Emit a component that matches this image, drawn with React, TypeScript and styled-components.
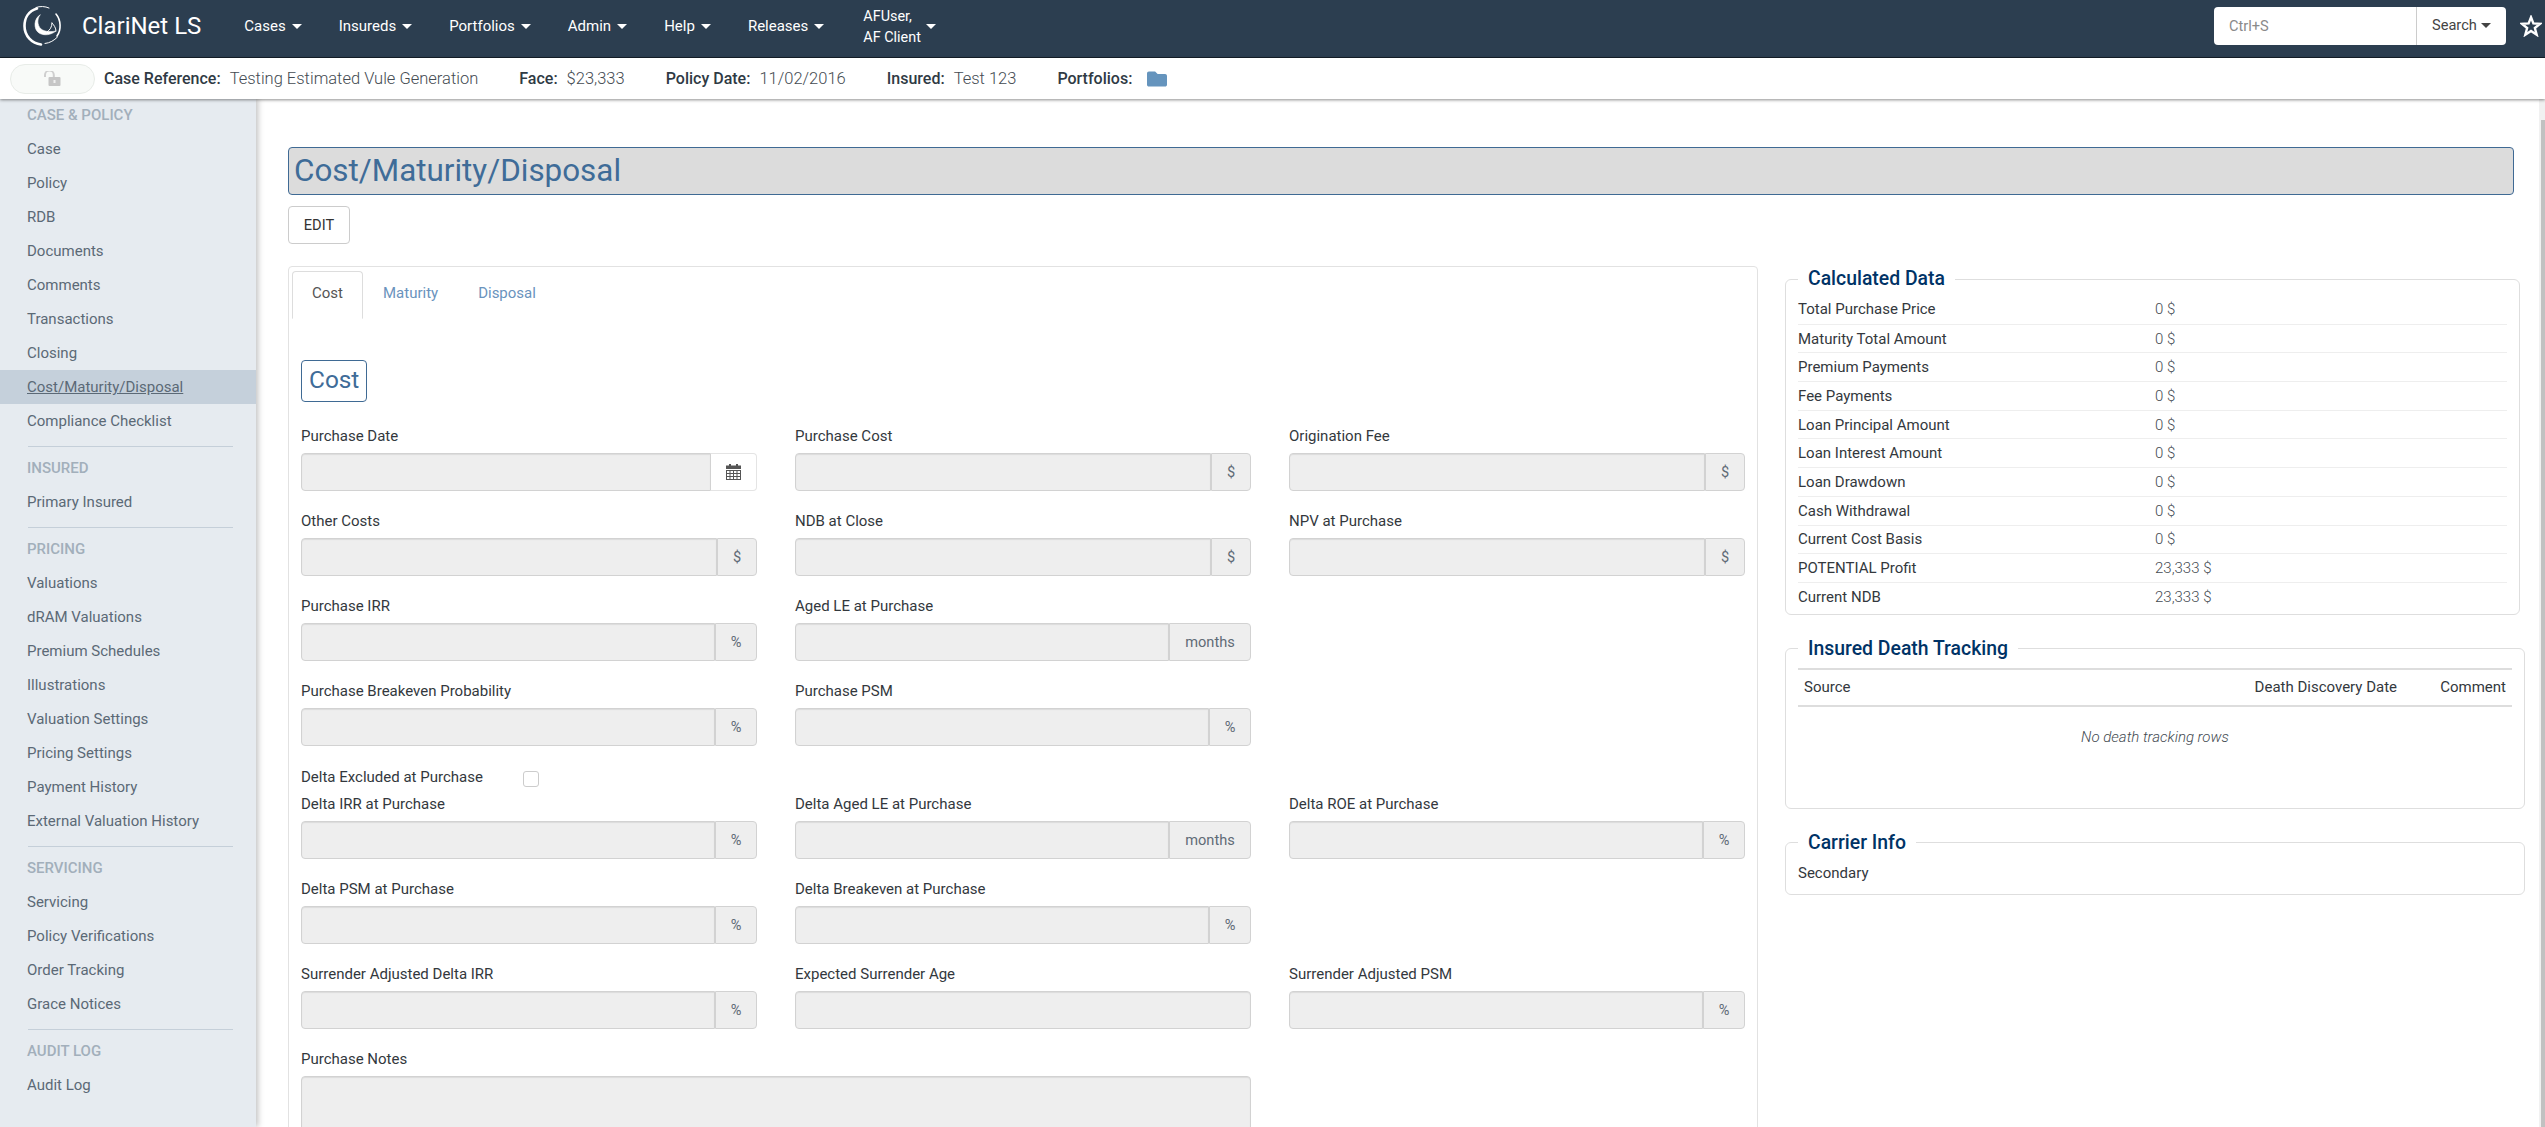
import styled, { createGlobalStyle } from "styled-components";
import { FaFolder } from "react-icons/fa";

const GlobalStyle = createGlobalStyle`
  html, body {
    margin: 0;
    padding: 0;
    height: 100%;
    overflow: hidden;
    background: #fff;
    font-family: Roboto, "Liberation Sans", sans-serif;
    font-size: 15px;
    color: #333;
  }
  * { box-sizing: border-box; }
`;

const Page = styled.div`
  width: 2545px;
  height: 1127px;
  display: flex;
  flex-direction: column;
  overflow: hidden;
`;

const NavBar = styled.nav`
  height: 58px;
  flex: none;
  display: flex;
  align-items: center;
  background: #2c3e50;
  border-bottom: 1px solid #151f29;
  color: #fff;
  padding-left: 23px;
`;

const LogoMark = styled.svg`
  width: 40px;
  height: 42px;
  flex: none;
  margin-bottom: 5px;
`;

const Brand = styled.span`
  font-size: 24px;
  margin-left: 19px;
  margin-right: 43px;
  margin-bottom: 6px;
  white-space: nowrap;
`;

const Caret = styled.i`
  display: inline-block;
  width: 0;
  height: 0;
  margin-left: 6px;
  vertical-align: 2px;
  border-top: 5px solid currentColor;
  border-left: 5px solid transparent;
  border-right: 5px solid transparent;
`;

const NavItem = styled.a`
  font-size: 15px;
  white-space: nowrap;
  margin-right: 37px;
  margin-bottom: 6px;
`;

const UserMenu = styled.div`
  display: flex;
  align-items: center;
  font-size: 14.4px;
  line-height: 21px;
  margin-left: 2px;
  margin-bottom: 4px;
`;

const UserCaret = styled(Caret)`
  margin-left: 5px;
  margin-bottom: 0;
`;

const SearchGroup = styled.div`
  margin-left: auto;
  display: flex;
  height: 38px;
  margin-bottom: 6px;
`;

const SearchInput = styled.div`
  width: 202px;
  background: #fff;
  border-radius: 4px 0 0 4px;
  color: #8a8a8a;
  font-size: 14.6px;
  line-height: 38px;
  padding-left: 15px;
`;

const SearchButton = styled.div`
  width: 90px;
  background: #fff;
  border-left: 1px solid #ccc;
  border-radius: 0 4px 4px 0;
  color: #444;
  font-size: 14.6px;
  line-height: 37px;
  padding-left: 15px;
  white-space: nowrap;

  ${Caret} {
    margin-left: 4px;
  }
`;

const StarIcon = styled.svg`
  width: 22px;
  height: 22px;
  margin: 0 3px 6px 14px;
  flex: none;
`;

const CaseBar = styled.div`
  height: 41px;
  flex: none;
  display: flex;
  align-items: center;
  padding-left: 10px;
  background: #fff;
  font-size: 16.5px;
  font-weight: 300;
  color: #444b52;
  position: relative;
  z-index: 3;
  box-shadow: 0 1px 3px rgba(0, 0, 0, 0.45);
`;

const LockPill = styled.div`
  width: 85px;
  height: 30px;
  margin-right: 9px;
  display: flex;
  align-items: center;
  justify-content: center;
  background: #f8faf8;
  border: 1px solid #e8ece8;
  border-radius: 15px;
`;

const CaseItem = styled.span`
  margin-right: 41px;
  white-space: nowrap;
  display: inline-flex;
  align-items: center;
`;

const CaseLabel = styled.b`
  font-size: 16px;
  font-weight: 500;
  color: #2f3a44;
  margin-right: 9px;
`;

const FolderIcon = styled(FaFolder)`
  width: 20px;
  height: 20px;
  margin-left: 6px;
  color: #6594bd;
`;

const Body = styled.div`
  flex: 1;
  min-height: 0;
  display: flex;
`;

const Sidebar = styled.aside`
  width: 256px;
  flex: none;
  margin-top: -1px;
  background: #e6ebf0;
  box-shadow: 2px 0 6px rgba(0, 0, 0, 0.25);
  position: relative;
  z-index: 2;
  overflow: hidden;
`;

const SideHeading = styled.div`
  height: 34px;
  line-height: 34px;
  padding-left: 27px;
  font-size: 15px;
  font-weight: 500;
  color: #a2afbb;
  text-transform: uppercase;
  white-space: nowrap;
`;

const SideLink = styled.a<{ $active?: boolean }>`
  display: block;
  height: 34px;
  line-height: 34px;
  padding-left: 27px;
  font-size: 15px;
  color: #5b6976;
  white-space: nowrap;
  background: ${(p) => (p.$active ? "#c5d0db" : "transparent")};
  text-decoration: ${(p) => (p.$active ? "underline" : "none")};
`;

const SideDivider = styled.hr`
  border: 0;
  border-top: 1px solid #c5cfd9;
  margin: 8px 23px 4px 28px;
`;

const Main = styled.main`
  flex: 1;
  min-width: 0;
  padding: 48px 25px 0 32px;
  overflow: hidden;
`;

const TitleBar = styled.h1`
  margin: 0;
  height: 48px;
  line-height: 46px;
  padding-left: 5px;
  background: #dcdcdc;
  border: 1px solid #3f6a94;
  border-radius: 4px;
  color: #3f6c98;
  font-size: 31.4px;
  font-weight: 400;
`;

const EditButton = styled.button`
  display: block;
  width: 62px;
  height: 38px;
  margin: 11px 0 22px;
  padding: 0;
  background: #fff;
  border: 1px solid #ccc;
  border-radius: 4px;
  color: #333;
  font-family: inherit;
  font-size: 14.6px;
`;

const Columns = styled.div`
  display: flex;
  align-items: flex-start;
  gap: 27px;
  margin-right: -11px;
`;

const FormPanel = styled.section`
  width: 1470px;
  flex: none;
  border: 1px solid #e2e2e2;
  border-radius: 4px;
  padding: 4px 12px 40px;
`;

const Tabs = styled.div`
  display: flex;
  width: 263px;
  height: 48px;
  margin-left: -9px;
  border-bottom: 1px solid #ddd;
`;

const Tab = styled.div<{ $active?: boolean }>`
  height: 48px;
  line-height: 43px;
  padding: 0 19px;
  color: ${(p) => (p.$active ? "#555" : "#6a93bd")};
  background: #fff;
  border: 1px solid ${(p) => (p.$active ? "#ddd" : "transparent")};
  border-bottom-color: ${(p) => (p.$active ? "#fff" : "transparent")};
  border-radius: 4px 4px 0 0;
`;

const SectionTag = styled.h2`
  display: inline-block;
  margin: 41px 0 24px;
  height: 42px;
  line-height: 38px;
  padding: 0 7px;
  border: 1px solid #3f6a94;
  border-radius: 4px;
  color: #3f6c98;
  font-size: 24.4px;
  font-weight: 400;
`;

const FormRow = styled.div`
  display: grid;
  grid-template-columns: repeat(3, 1fr);
  column-gap: 38px;
`;

const Field = styled.div<{ $span?: number }>`
  grid-column: span ${(p) => p.$span ?? 1};
  min-width: 0;
  padding-bottom: 20px;
`;

const FieldLabel = styled.label`
  display: block;
  height: 21px;
  line-height: 21px;
  margin-bottom: 6px;
  font-size: 15px;
  color: #33383d;
  white-space: nowrap;
`;

const InputGroup = styled.div`
  display: flex;
  height: 38px;
`;

const FakeInput = styled.div`
  flex: 1;
  min-width: 0;
  background: #eeeeee;
  border: 1px solid #d2d2d2;
  border-radius: 4px 0 0 4px;
  box-shadow: inset 0 1px 1px rgba(0, 0, 0, 0.08);
`;

const Addon = styled.span<{ $width: number; $white?: boolean }>`
  width: ${(p) => p.$width}px;
  flex: none;
  display: flex;
  align-items: center;
  justify-content: center;
  background: ${(p) => (p.$white ? "#fff" : "#eee")};
  border: 1px solid ${(p) => (p.$white ? "#e4e4e4" : "#d2d2d2")};
  border-left-color: #d2d2d2;
  border-left-width: ${(p) => (p.$white ? 0 : 1)}px;
  border-radius: 0 4px 4px 0;
  color: #5f6b76;
  font-size: 14.6px;
`;

const FullInput = styled(FakeInput)`
  border-radius: 4px;
`;

const NotesBox = styled(FullInput)`
  flex: none;
  height: 130px;
`;

const CheckRow = styled.div`
  display: flex;
  align-items: center;
  height: 28px;
  padding-bottom: 7px;
`;

const CheckLabel = styled.span`
  width: 222px;
  font-size: 15px;
  color: #33383d;
`;

const CheckBox = styled.span`
  width: 16px;
  height: 16px;
  margin-top: 4px;
  background: #fff;
  border: 1px solid #ccc;
  border-radius: 3px;
`;

const SidePanels = styled.div`
  flex: 1;
  min-width: 0;
  display: flex;
  flex-direction: column;
`;

const Group = styled.fieldset<{ $inset?: number; $minHeight?: number }>`
  margin: 0 ${(p) => p.$inset ?? 0}px 21px 0;
  padding: 0 12px;
  min-width: 0;
  min-height: ${(p) => p.$minHeight ?? 0}px;
  border: 1px solid #dedede;
  border-radius: 6px;
`;

const GroupTitle = styled.legend`
  padding: 0 10px;
  font-size: 19.4px;
  line-height: 26px;
  font-weight: 500;
  color: #003366;
`;

const DataList = styled.div`
  padding: 3px 0;
`;

const DataRow = styled.div`
  display: flex;
  height: 28.7px;
  align-items: center;
  font-size: 15px;
  color: #33383d;
  border-top: 1px solid #eee;

  &:first-of-type {
    border-top: 0;
  }
`;

const DataLabel = styled.span`
  width: 357px;
`;

const DataValue = styled.span`
  font-weight: 300;
  color: #444b52;
`;

const TrackTable = styled.table`
  width: 100%;
  margin-top: 6px;
  border-collapse: collapse;
  font-size: 15px;
  color: #33383d;
`;

const TrackHead = styled.th<{ $width?: number }>`
  width: ${(p) => (p.$width ? `${p.$width}px` : "auto")};
  height: 37px;
  padding: 0 6px;
  font-weight: 400;
  text-align: ${(p) => (p.$width ? "right" : "left")};
  border-top: 2px solid #ddd;
  border-bottom: 2px solid #ddd;
  white-space: nowrap;
`;

const EmptyNote = styled.td`
  height: 62px;
  text-align: center;
  font-style: italic;
  font-weight: 300;
  color: #444b52;
`;

const CarrierLine = styled.div`
  height: 38px;
  padding-top: 5px;
  line-height: 24px;
  font-size: 15px;
  color: #33383d;
`;

const ScrollTrack = styled.div`
  width: 6px;
  flex: none;
  background: #f1f1f1;
  padding-top: 21px;
  display: flex;
  justify-content: flex-end;
`;

const ScrollThumb = styled.div`
  width: 4px;
  height: 100%;
  background: #c1c1c1;
`;

const sideSections = [
  {
    title: "Case & Policy",
    links: ["Case", "Policy", "RDB", "Documents", "Comments", "Transactions", "Closing", "Cost/Maturity/Disposal", "Compliance Checklist"],
  },
  { title: "Insured", links: ["Primary Insured"] },
  {
    title: "Pricing",
    links: ["Valuations", "dRAM Valuations", "Premium Schedules", "Illustrations", "Valuation Settings", "Pricing Settings", "Payment History", "External Valuation History"],
  },
  { title: "Servicing", links: ["Servicing", "Policy Verifications", "Order Tracking", "Grace Notices"] },
  { title: "Audit Log", links: ["Audit Log"] },
];

const navItems = ["Cases", "Insureds", "Portfolios", "Admin", "Help", "Releases"];

const calculated = [
  ["Total Purchase Price", "0 $"],
  ["Maturity Total Amount", "0 $"],
  ["Premium Payments", "0 $"],
  ["Fee Payments", "0 $"],
  ["Loan Principal Amount", "0 $"],
  ["Loan Interest Amount", "0 $"],
  ["Loan Drawdown", "0 $"],
  ["Cash Withdrawal", "0 $"],
  ["Current Cost Basis", "0 $"],
  ["POTENTIAL Profit", "23,333 $"],
  ["Current NDB", "23,333 $"],
];

const addonWidth = (unit: string) => (unit === "months" ? 82 : unit === "$" ? 40 : 42);

const Logo = () => (
  <LogoMark viewBox="0 0 40 42" fill="none" stroke="#fff" strokeLinecap="round">
    <path d="M14 3.5C5.5 6 1.5 13 1.5 21C1.5 31 9 38.5 18 39.5" strokeWidth="2.6" />
    <path d="M13 2.5C17 1 22 1.2 26 3" strokeWidth="1" />
    <path d="M33 9C38 15 38.5 25 34 31" strokeWidth="1.6" />
    <path d="M22 38.5C27 38 31 35.5 34.5 32" strokeWidth="1" />
    <path d="M17 10C11 13 10 24 16 28C21 31 28 30 33 26C28 27 22 27 18 24C14 20 14 14 17 10Z" fill="#fff" strokeWidth="0.6" />
    <path d="M29 18C31 20 33 23 33 26" strokeWidth="1" />
    <path d="M29 18C29 22 27 25 24 27" strokeWidth="1" />
  </LogoMark>
);

const UnlockIcon = () => (
  <svg width="17" height="15" viewBox="0 0 17 15" fill="none">
    <path d="M1 6V4a4.4 4.4 0 0 1 8.8 0v2" stroke="#cfcfcf" strokeWidth="2" />
    <rect x="4.5" y="6" width="12" height="9" rx="1" fill="#c6c6c6" />
    <rect x="9.5" y="9" width="2" height="3" fill="#efefef" />
  </svg>
);

const CalendarIcon = () => (
  <svg width="15" height="16" viewBox="0 0 15 16" fill="#555">
    <rect x="3" y="0" width="2" height="2" />
    <rect x="10" y="0" width="2" height="2" />
    <rect x="0" y="1.5" width="15" height="3.5" />
    <path fillRule="evenodd" d="M0 6h15v10H0zM1 7v2h2.5V7zM4.5 7v2h2.5V7zM8 7v2h2.5V7zM11.5 7v2H14V7zM1 10v2h2.5v-2zM4.5 10v2h2.5v-2zM8 10v2h2.5v-2zM11.5 10v2H14v-2zM1 13v2h2.5v-2zM4.5 13v2h2.5v-2zM8 13v2h2.5v-2zM11.5 13v2H14v-2z" />
  </svg>
);

const Input = ({ label, unit, span }: { label: string; unit?: string; span?: number }) => (
  <Field $span={span}>
    <FieldLabel>{label}</FieldLabel>
    <InputGroup>
      {unit ? (
        <>
          <FakeInput />
          <Addon $width={addonWidth(unit)}>{unit}</Addon>
        </>
      ) : (
        <FullInput />
      )}
    </InputGroup>
  </Field>
);

const App = () => {
  return (
    <Page>
      <GlobalStyle />
      <NavBar>
        <Logo />
        <Brand>ClariNet LS</Brand>
        {navItems.map((item) => (
          <NavItem key={item}>
            {item}
            <Caret />
          </NavItem>
        ))}
        <UserMenu>
          <div>
            AFUser,
            <br />
            AF Client
          </div>
          <UserCaret />
        </UserMenu>
        <SearchGroup>
          <SearchInput>Ctrl+S</SearchInput>
          <SearchButton>
            Search
            <Caret />
          </SearchButton>
        </SearchGroup>
        <StarIcon viewBox="0 0 24 24" fill="none" stroke="#fff" strokeWidth="2.6" strokeLinejoin="miter">
          <polygon points="12,2.5 14.6,9.2 22,9.6 16.2,14.2 18.2,21.5 12,17.4 5.8,21.5 7.8,14.2 2,9.6 9.4,9.2" />
        </StarIcon>
      </NavBar>
      <CaseBar>
        <LockPill>
          <UnlockIcon />
        </LockPill>
        <CaseItem>
          <CaseLabel>Case Reference:</CaseLabel>Testing Estimated Vule Generation
        </CaseItem>
        <CaseItem>
          <CaseLabel>Face:</CaseLabel>$23,333
        </CaseItem>
        <CaseItem>
          <CaseLabel>Policy Date:</CaseLabel>11/02/2016
        </CaseItem>
        <CaseItem>
          <CaseLabel>Insured:</CaseLabel>Test 123
        </CaseItem>
        <CaseItem>
          <CaseLabel>Portfolios:</CaseLabel>
          <FolderIcon />
        </CaseItem>
      </CaseBar>
      <Body>
        <Sidebar>
          {sideSections.map((section, index) => (
            <div key={section.title}>
              {index > 0 && <SideDivider />}
              <SideHeading>{section.title}</SideHeading>
              {section.links.map((link) => (
                <SideLink key={link} $active={link === "Cost/Maturity/Disposal"}>
                  {link}
                </SideLink>
              ))}
            </div>
          ))}
        </Sidebar>
        <Main>
          <TitleBar>Cost/Maturity/Disposal</TitleBar>
          <EditButton>EDIT</EditButton>
          <Columns>
            <FormPanel>
              <Tabs>
                <Tab $active>Cost</Tab>
                <Tab>Maturity</Tab>
                <Tab>Disposal</Tab>
              </Tabs>
              <SectionTag>Cost</SectionTag>
              <FormRow>
                <Field>
                  <FieldLabel>Purchase Date</FieldLabel>
                  <InputGroup>
                    <FakeInput />
                    <Addon $width={46} $white>
                      <CalendarIcon />
                    </Addon>
                  </InputGroup>
                </Field>
                <Input label="Purchase Cost" unit="$" />
                <Input label="Origination Fee" unit="$" />
              </FormRow>
              <FormRow>
                <Input label="Other Costs" unit="$" />
                <Input label="NDB at Close" unit="$" />
                <Input label="NPV at Purchase" unit="$" />
              </FormRow>
              <FormRow>
                <Input label="Purchase IRR" unit="%" />
                <Input label="Aged LE at Purchase" unit="months" />
              </FormRow>
              <FormRow>
                <Input label="Purchase Breakeven Probability" unit="%" />
                <Input label="Purchase PSM" unit="%" />
              </FormRow>
              <CheckRow>
                <CheckLabel>Delta Excluded at Purchase</CheckLabel>
                <CheckBox />
              </CheckRow>
              <FormRow>
                <Input label="Delta IRR at Purchase" unit="%" />
                <Input label="Delta Aged LE at Purchase" unit="months" />
                <Input label="Delta ROE at Purchase" unit="%" />
              </FormRow>
              <FormRow>
                <Input label="Delta PSM at Purchase" unit="%" />
                <Input label="Delta Breakeven at Purchase" unit="%" />
              </FormRow>
              <FormRow>
                <Input label="Surrender Adjusted Delta IRR" unit="%" />
                <Input label="Expected Surrender Age" />
                <Input label="Surrender Adjusted PSM" unit="%" />
              </FormRow>
              <FormRow>
                <Field $span={2}>
                  <FieldLabel>Purchase Notes</FieldLabel>
                  <NotesBox />
                </Field>
              </FormRow>
            </FormPanel>
            <SidePanels>
              <Group $inset={5}>
                <GroupTitle>Calculated Data</GroupTitle>
                <DataList>
                  {calculated.map(([label, value]) => (
                    <DataRow key={label}>
                      <DataLabel>{label}</DataLabel>
                      <DataValue>{value}</DataValue>
                    </DataRow>
                  ))}
                </DataList>
              </Group>
              <Group $minHeight={173}>
                <GroupTitle>Insured Death Tracking</GroupTitle>
                <TrackTable>
                  <thead>
                    <tr>
                      <TrackHead>Source</TrackHead>
                      <TrackHead $width={190}>Death Discovery Date</TrackHead>
                      <TrackHead $width={109}>Comment</TrackHead>
                    </tr>
                  </thead>
                  <tbody>
                    <tr>
                      <EmptyNote colSpan={3}>No death tracking rows</EmptyNote>
                    </tr>
                  </tbody>
                </TrackTable>
              </Group>
              <Group>
                <GroupTitle>Carrier Info</GroupTitle>
                <CarrierLine>Secondary</CarrierLine>
              </Group>
            </SidePanels>
          </Columns>
        </Main>
        <ScrollTrack>
          <ScrollThumb />
        </ScrollTrack>
      </Body>
    </Page>
  );
};

export default App;
